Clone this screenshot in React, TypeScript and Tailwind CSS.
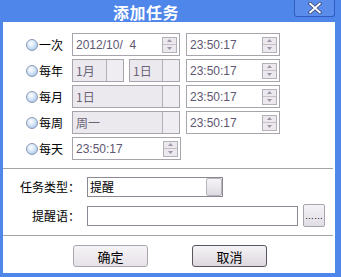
import React from 'react';

const cjk = "font-['Noto_Sans_CJK_SC','Noto_Sans',sans-serif]";
const num = "font-['Liberation_Sans','Noto_Sans_CJK_SC',sans-serif]";

function Radio() {
  return (
    <span className="w-[12px] h-[12px] rounded-full border border-[#8a9ab4] bg-[radial-gradient(circle_at_40%_35%,#ffffff_0%,#d4e4f8_45%,#94b6e4_100%)] shrink-0" />
  );
}

function Spinner() {
  return (
    <div className="w-[15px] h-[16px] flex flex-col border border-[#b4b0b8] bg-[#ece8ee] shrink-0">
      <div className="flex-1 flex items-center justify-center border-b border-[#c4c0c8]">
        <svg width="5" height="3" viewBox="0 0 5 3"><path d="M2.5 0 L5 3 L0 3 Z" fill="#9a98a8" /></svg>
      </div>
      <div className="flex-1 flex items-center justify-center">
        <svg width="5" height="3" viewBox="0 0 5 3"><path d="M0 0 L5 0 L2.5 3 Z" fill="#9a98a8" /></svg>
      </div>
    </div>
  );
}

function SpinField({ value, width }: { value: string; width: string }) {
  return (
    <div className={`${width} h-[23px] flex items-center border border-[#a8a4ac] bg-white pl-[3px] pr-[2px]`}>
      <span className={`${num} text-[12px] text-[#5e5672] flex-1 whitespace-pre`}>{value}</span>
      <Spinner />
    </div>
  );
}

function Combo({ value, width }: { value: string; width: string }) {
  return (
    <div className={`${width} h-[23px] flex items-center border border-[#a8a4ac] bg-[#ebe9ee]`}>
      <span className={`${cjk} text-[12px] text-[#6a6478] flex-1 pl-[3px] leading-none`}>{value}</span>
      <div className="w-[17px] h-full border-l border-[#b4b0b8] bg-[#efedf1]" />
    </div>
  );
}

function RowLabel({ text }: { text: string }) {
  return (
    <div className="w-[69px] flex items-center pl-[23px] shrink-0">
      <Radio />
      <span className={`${cjk} text-[12px] text-black leading-none ml-[1px]`}>{text}</span>
    </div>
  );
}

export default function App() {
  return (
    <div className="w-[341px] h-[277px] flex flex-col bg-[#4f86ea] pl-[3px] pr-[6px] pb-[4px] overflow-hidden">
      {/* Title bar */}
      <div className="h-[22px] flex items-start shrink-0">
        <span className={`${cjk} text-[16px] font-bold text-white leading-none mt-[4px] ml-[110px] tracking-[0.5px]`}>添加任务</span>
        <div className="ml-auto w-[41px] h-[17px] border border-t-0 border-[#2f5cbf] rounded-b-[3px] bg-[#5a8cec] flex items-center justify-center">
          <svg width="14" height="12" viewBox="0 0 14 12">
            <path d="M2 1.5 L12 10.5 M12 1.5 L2 10.5" stroke="#3a4a78" strokeWidth="3.6" strokeLinecap="round" />
            <path d="M2 1.5 L12 10.5 M12 1.5 L2 10.5" stroke="#ffffff" strokeWidth="1.8" strokeLinecap="round" />
          </svg>
        </div>
      </div>

      {/* Body */}
      <div className="flex-1 bg-white flex flex-col pt-[11px]">
        <div className="flex flex-col gap-[3px]">
          <div className="flex items-center h-[23px]">
            <RowLabel text="一次" />
            <SpinField value="2012/10/  4" width="w-[108px]" />
            <div className="ml-[6px]"><SpinField value="23:50:17" width="w-[94px]" /></div>
          </div>
          <div className="flex items-center h-[23px]">
            <RowLabel text="每年" />
            <Combo value="1月" width="w-[52px]" />
            <div className="ml-[5px]"><Combo value="1日" width="w-[51px]" /></div>
            <div className="ml-[6px]"><SpinField value="23:50:17" width="w-[94px]" /></div>
          </div>
          <div className="flex items-center h-[23px]">
            <RowLabel text="每月" />
            <Combo value="1日" width="w-[108px]" />
            <div className="ml-[6px]"><SpinField value="23:50:17" width="w-[94px]" /></div>
          </div>
          <div className="flex items-center h-[23px]">
            <RowLabel text="每周" />
            <Combo value="周一" width="w-[108px]" />
            <div className="ml-[6px]"><SpinField value="23:50:17" width="w-[94px]" /></div>
          </div>
          <div className="flex items-center h-[23px]">
            <RowLabel text="每天" />
            <SpinField value="23:50:17" width="w-[109px]" />
          </div>
        </div>

        <div className="h-px bg-[#a4a4a4] mt-[8px] mr-[2px]" />

        {/* Task type */}
        <div className="flex items-center h-[20px] mt-[8px]">
          <span className={`${cjk} w-[77px] text-right text-[12px] text-black leading-none`}>任务类型：</span>
          <div className="ml-[7px] w-[136px] h-[20px] flex items-center border border-[#8c8894] bg-white">
            <span className={`${cjk} text-[12px] text-black leading-none flex-1 pl-[2px]`}>提醒</span>
            <div className="w-[16px] h-[18px] border border-[#b8b4bc] rounded-[2px] bg-[linear-gradient(#f6f4f8,#dedce2)]" />
          </div>
        </div>

        <div className="flex items-center h-[23px] mt-[7px]">
          <span className={`${cjk} w-[77px] text-right text-[12px] text-black leading-none`}>提醒语：</span>
          <div className="ml-[7px] w-[211px] h-[20px] border border-[#8c8894] bg-white" />
          <div className="ml-[5px] w-[22px] h-[23px] border border-[#a8a4ac] rounded-[2px] bg-[linear-gradient(#f4f2f6,#e0dee4)] flex items-end justify-center pb-[5px]">
            <span className={`${num} text-[9px] text-black leading-none`}>……</span>
          </div>
        </div>

        <div className="h-px bg-[#a4a4a4] mt-[8px] mr-[2px]" />

        {/* Buttons */}
        <div className="flex items-center mt-[9px] pl-[70px] gap-[44px]">
          <button className={`${cjk} w-[75px] h-[22px] border border-[#aaa6b0] rounded-[3px] bg-[linear-gradient(#f6f3f6,#e6e2e8)] text-[13px] text-black leading-none`}>确定</button>
          <button className={`${cjk} w-[75px] h-[22px] border border-[#5a5660] rounded-[3px] bg-[linear-gradient(#f6f3f6,#dcd8de)] text-[13px] text-black leading-none`}>取消</button>
        </div>
      </div>
    </div>
  );
}
